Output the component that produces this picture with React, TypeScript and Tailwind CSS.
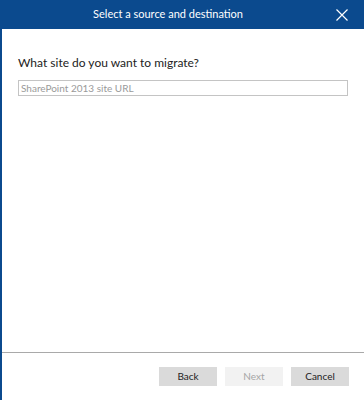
export default function App() {
  return (
    <div
      className="w-[364px] h-[400px] flex flex-col bg-white overflow-hidden"
      style={{ fontFamily: 'Lato, "Noto Sans", sans-serif' }}
    >
      <div className="h-[29px] shrink-0 bg-[#0b4a8e] flex items-center">
        <div className="flex-1 text-center text-white text-[11px] pl-[16px]">
          Select a source and destination
        </div>
        <div className="w-[44px] flex justify-center">
          <svg width="12" height="12" viewBox="0 0 12 12" fill="none" stroke="white" strokeWidth="1.2">
            <path d="M0.5 0.5 L11.5 11.5 M11.5 0.5 L0.5 11.5" />
          </svg>
        </div>
      </div>
      <div className="flex-1 flex flex-col border-l-2 border-[#0b4a8e]">
        <div className="flex-1 pl-[16px] pr-[16px] pt-[25px]">
          <div className="text-[12px] leading-[17px] text-[#222]">What site do you want to migrate?</div>
          <div className="mt-[9px] h-[16px] border border-[#c4c4c4] flex items-center px-[2px] text-[10px] text-[#9a9a9a]">
            SharePoint 2013 site URL
          </div>
        </div>
        <div className="h-[48px] shrink-0 border-t border-[#a9a9a9] flex justify-end items-start pt-[14px] pr-[15px] gap-[8px]">
          <button className="w-[58px] h-[19px] bg-[#dadada] text-[10px] text-[#222]">Back</button>
          <button className="w-[58px] h-[19px] bg-[#f2f2f2] text-[10px] text-[#a6a6a6]">Next</button>
          <button className="w-[58px] h-[19px] bg-[#dadada] text-[10px] text-[#222]">Cancel</button>
        </div>
      </div>
    </div>
  );
}
